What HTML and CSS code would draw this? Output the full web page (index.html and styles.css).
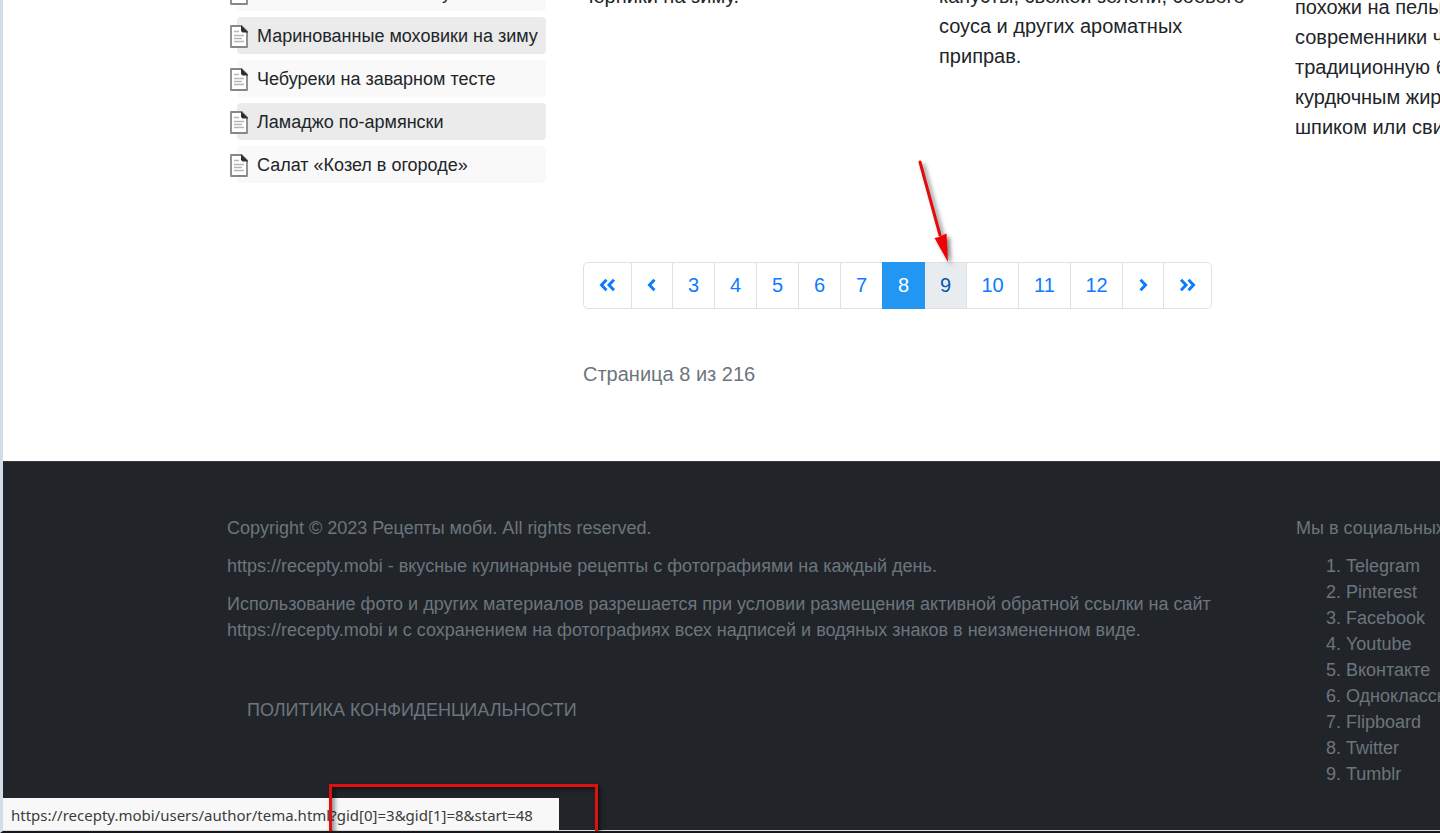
FILE: index.html
```
<!DOCTYPE html>
<html lang="ru">
<head>
  <meta charset="UTF-8" />
  <meta name="viewport" content="width=device-width, initial-scale=1.0" />
  <title>Рецепты моби</title>
  <link rel="stylesheet" href="styles.css">
</head>
<body>
  <svg class="sprite" aria-hidden="true">
    <symbol id="doc" viewBox="0 0 18 23">
      <path d="M1 1h10.500l5.500 5.500v15.500H1z" fill="#fff" stroke="#85888b" stroke-width="1.800" stroke-linejoin="round" />
      <path d="M11 .2 18 7v.5h-5.500L11 6z" fill="#2b2f33" />
      <path d="M4 6.500h5M4 10.500h10M4 13.500h8M4 16.500h10" stroke="#b4b6b8" stroke-width="1.400" />
    </symbol>
    <symbol id="angle" viewBox="0 0 10 14">
      <path d="M7.500 1.800 2.500 7l5 5.200" fill="none" stroke="currentColor" stroke-width="3" />
    </symbol>
    <symbol id="angles" viewBox="0 0 17 14">
      <path d="M7.500 1.800 2.500 7l5 5.200M15 1.800 10 7l5 5.200" fill="none" stroke="currentColor" stroke-width="3" />
    </symbol>
  </svg>

  <div class="page">
    <main class="main">
      <aside class="sidebar">
        <ul class="recipes">
          <li><a href="#"><svg class="doc"><use href="#doc" /></svg>Лечо с маслом на зиму</a></li>
          <li><a href="#"><svg class="doc"><use href="#doc" /></svg>Маринованные моховики на зиму</a></li>
          <li><a href="#"><svg class="doc"><use href="#doc" /></svg>Чебуреки на заварном тесте</a></li>
          <li><a href="#"><svg class="doc"><use href="#doc" /></svg>Ламаджо по-армянски</a></li>
          <li><a href="#"><svg class="doc"><use href="#doc" /></svg>Салат «Козел в огороде»</a></li>
        </ul>
      </aside>

      <section class="content">
        <div class="cards">
          <p>черники на зиму.</p>
          <p>капусты, свежей зелени, соевого соуса и других ароматных приправ.</p>
          <p class="card-long">похожи на пельмени, и наши<br>современники чаще готовят<br>традиционную баранину с<br>курдючным жиром, свиным<br>шпиком или свининой.</p>
        </div>

        <nav aria-label="Страницы">
          <ul class="pagination">
            <li><a href="#" aria-label="В начало"><svg class="angles"><use href="#angles" /></svg></a></li>
            <li><a href="#" aria-label="Назад"><svg class="angle"><use href="#angle" /></svg></a></li>
            <li class="num"><a href="#">3</a></li>
            <li class="num"><a href="#">4</a></li>
            <li class="num"><a href="#">5</a></li>
            <li class="num"><a href="#">6</a></li>
            <li class="num"><a href="#">7</a></li>
            <li class="num active"><a href="#" aria-current="page">8</a></li>
            <li class="num hovered">
              <a href="#">9</a>
              <svg class="arrow" viewBox="0 0 44 112" aria-hidden="true">
                <path d="M6 5 26 78" stroke="#e30b0b" stroke-width="3" stroke-linecap="round" />
                <path d="M20.500 81 25 80 32.500 76.500 34 105z" fill="#f00000" />
              </svg>
            </li>
            <li class="num wide"><a href="#">10</a></li>
            <li class="num wide"><a href="#">11</a></li>
            <li class="num wide"><a href="#">12</a></li>
            <li><a href="#" aria-label="Вперед"><svg class="angle flip"><use href="#angle" /></svg></a></li>
            <li><a href="#" aria-label="В конец"><svg class="angles flip"><use href="#angles" /></svg></a></li>
          </ul>
        </nav>

        <p class="counter">Страница 8 из 216</p>
      </section>
    </main>

    <footer class="footer">
      <div class="footer-text">
        <p>Copyright © 2023 Рецепты моби. All rights reserved.</p>
        <p>https://recepty.mobi - вкусные кулинарные рецепты с фотографиями на каждый день.</p>
        <p>Использование фото и других материалов разрешается при условии размещения активной обратной ссылки на сайт<br>https://recepty.mobi и с сохранением на фотографиях всех надписей и водяных знаков в неизмененном виде.</p>
        <a class="privacy" href="#">ПОЛИТИКА КОНФИДЕНЦИАЛЬНОСТИ</a>
      </div>
      <div class="social">
        <p>Мы в социальных сетях</p>
        <ol>
          <li><a href="#">Telegram</a></li>
          <li><a href="#">Pinterest</a></li>
          <li><a href="#">Facebook</a></li>
          <li><a href="#">Youtube</a></li>
          <li><a href="#">Вконтакте</a></li>
          <li><a href="#">Одноклассники</a></li>
          <li><a href="#">Flipboard</a></li>
          <li><a href="#">Twitter</a></li>
          <li><a href="#">Tumblr</a></li>
        </ol>
      </div>
    </footer>

    <div class="status">https://recepty.mobi/users/author/tema.html?gid[0]=3&amp;gid[1]=8&amp;start=48</div>
    <div class="marker"></div>
  </div>
</body>
</html>
```
FILE: styles.css
```
* {
  box-sizing: border-box;
}

body {
  margin: 0;
  font-family: "Liberation Sans", Arial, sans-serif;
  font-size: 20px;
  line-height: 30px;
  color: #212529;
  background: #fff;
}

a {
  color: inherit;
  text-decoration: none;
}

p, ul, ol {
  margin: 0;
  padding: 0;
}

ul {
  list-style: none;
}

.sprite {
  display: none;
}

.page {
  position: relative;
  display: flex;
  flex-direction: column;
  height: 100vh;
  overflow: hidden;
  border-left: 3px solid #d2dde8;
  border-bottom: 2px solid #17171c;
}

.main {
  display: flex;
  flex-shrink: 0;
  gap: 37px;
  padding-left: 224px;
  padding-bottom: 72px;
}

/* sidebar */
.sidebar {
  flex: 0 0 319px;
  margin-top: -26px;
  font-size: 18px;
}

.recipes {
  display: flex;
  flex-direction: column;
  gap: 6px;
}

.recipes li {
  height: 37px;
  margin-left: 10px;
  border-radius: 4px;
  background: #f9f9f9;
}

.recipes li:nth-child(even) {
  background: #ebebeb;
}

.recipes a {
  display: flex;
  align-items: center;
  gap: 9px;
  height: 37px;
  margin-left: -7px;
  white-space: nowrap;
}

.doc {
  width: 18px;
  height: 23px;
  margin-top: 2px;
}

/* cards */
.content {
  flex: 1;
  min-width: 0;
}

.cards {
  display: grid;
  grid-template-columns: repeat(3, 326px);
  gap: 30px;
  height: 281px;
  margin-top: -19px;
}

.card-long {
  padding-top: 11px;
  white-space: nowrap;
}

/* pagination */
.pagination {
  display: flex;
  color: #0d7bff;
}

.pagination li {
  position: relative;
  margin-left: -1px;
}

.pagination li:first-child {
  margin-left: 0;
}

.pagination li > a {
  display: flex;
  align-items: center;
  justify-content: center;
  height: 47px;
  padding: 0 15px 2px;
  border: 1px solid #dee2e6;
}

.pagination .num > a {
  width: 43px;
  padding: 0 0 2px;
}

.pagination .wide > a {
  width: 53px;
}

.pagination li:first-child > a {
  border-radius: 5px 0 0 5px;
}

.pagination li:last-child > a {
  border-radius: 0 5px 5px 0;
}

.pagination .active {
  z-index: 1;
}

.pagination .active > a {
  color: #fff;
  background: #2196f3;
  border-color: #2196f3;
}

.pagination .hovered > a {
  color: #0056b3;
  background: #e9ecef;
}

.angle {
  width: 10px;
  height: 14px;
}

.angles {
  width: 17px;
  height: 14px;
}

.flip {
  transform: scaleX(-1);
}

.arrow {
  position: absolute;
  right: 9px;
  bottom: 40px;
  width: 44px;
  height: 112px;
  filter: drop-shadow(3px 3px 2px rgba(0, 0, 0, 0.5));
}

.counter {
  margin-top: 50px;
  color: #6c757d;
}

/* footer */
.footer {
  display: flex;
  flex: 1 0 auto;
  gap: 30px;
  padding: 53px 0 0 224px;
  font-size: 18px;
  line-height: 26px;
  color: #6c757d;
  background: #212529;
  border-top: 1px solid #343a40;
  border-bottom: 1px solid #dcdcdc;
  white-space: nowrap;
}

.footer-text {
  flex: 0 0 1039px;
}

.footer p {
  margin-bottom: 12px;
}

.privacy {
  display: inline-block;
  margin: 42px 0 0 20px;
}

.social ol {
  padding-left: 50px;
}

.status {
  position: absolute;
  left: 0;
  bottom: 1px;
  min-width: 556px;
  height: 32px;
  padding: 0 8px;
  font-family: "Noto Sans", "Open Sans", sans-serif;
  font-size: 15px;
  line-height: 35px;
  color: #3c3c3c;
  background: #f8f8f8;
}

.marker {
  position: absolute;
  left: 326px;
  bottom: -6px;
  width: 269px;
  height: 53px;
  border: 3px solid #e01010;
  box-shadow: 2px 2px 4px rgba(0, 0, 0, 0.6), inset 3px 3px 4px rgba(0, 0, 0, 0.4);
}
```
